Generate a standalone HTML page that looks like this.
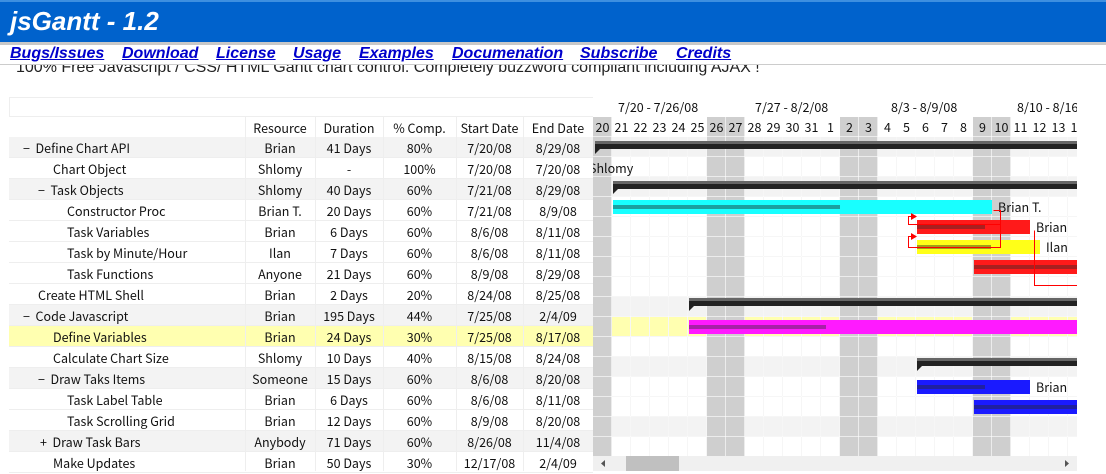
<!DOCTYPE html>
<html><head><meta charset="utf-8"><style>
*{margin:0;padding:0;box-sizing:border-box}
body{width:1106px;height:471px;overflow:hidden;background:#fff;position:relative;font-family:"Noto Sans CJK SC","Liberation Sans",sans-serif;font-size:12.5px;color:#111}
.a{position:absolute}
#hdr{left:0;top:0;width:1106px;height:42px;background:#0062cc;border-top:2px solid #3d8fe0}
#hdr span{position:absolute;left:10px;top:4px;font:italic bold 26px "Liberation Sans",sans-serif;color:#fff}
#bar{left:0;top:42px;width:1106px;height:3px;background:#c8c8c8}
.lk{position:absolute;top:45px;font:italic bold 16px "Liberation Sans",sans-serif;color:#0000cc;text-decoration:underline}
#sub{left:16px;top:64px;font:16px "Liberation Sans",sans-serif;color:#222;height:13px;overflow:hidden;white-space:nowrap}
.r{position:absolute;left:9px;width:584px;height:21px;border-bottom:1px solid #eee;line-height:22px}
.r span{position:absolute;top:0;text-align:center;white-space:nowrap}
.g{background:#f3f3f3}.y{background:#ffffb0}
.c1{left:236px;width:70px}.c2{left:306px;width:68px}.c3{left:374px;width:73px}.c4{left:447px;width:67px}.c5{left:514px;width:70px}
.vl{position:absolute;top:117px;width:1px;height:354px;background:#eee}
#chart{left:593px;top:97px;width:484px;height:374px;overflow:hidden}
.day{position:absolute;top:20px;width:19px;height:20px;text-align:center;line-height:20px;font-size:12.5px}
.we{position:absolute;top:20px;width:19px;height:340px;background:#cfcfcf}
.wk{position:absolute;top:0;font-size:12.5px;line-height:20px;white-space:nowrap}
.crow{position:absolute;left:0;width:484px;height:20px}
.bar{position:absolute;height:14px}
.pr{position:absolute;height:4px;top:5px;left:0}
.sm{position:absolute;height:8px;background:#222;border-top:3px solid #666}
.sm:after{content:"";position:absolute;left:0;top:5px;border-top:5px solid #222;border-right:5px solid transparent}
.lb{position:absolute;font-size:12.5px;white-space:nowrap}
</style></head><body>
<div id="hdr" class="a"><span>jsGantt - 1.2</span></div>
<div id="bar" class="a"></div>
<div id="sub" class="a"><div style="margin-top:-5px">100% Free Javascript / CSS/ HTML Gantt chart control. Completely buzzword compliant including AJAX !</div></div>
<span class="lk" style="left:10px">Bugs/Issues</span>
<span class="lk" style="left:122px">Download</span>
<span class="lk" style="left:216px">License</span>
<span class="lk" style="left:293px">Usage</span>
<span class="lk" style="left:359px">Examples</span>
<span class="lk" style="left:452px">Documenation</span>
<span class="lk" style="left:580px">Subscribe</span>
<span class="lk" style="left:676px">Credits</span>
<div class="a" style="left:0;top:64px;width:1106px;height:1px;background:#ccc"></div>

<div class="a" style="left:9px;top:97px;width:584px;height:20px;border:1px solid #eee;border-right:none"></div>
<div class="r" style="top:117px"><span class="c1">Resource</span><span class="c2">Duration</span><span class="c3">% Comp.</span><span class="c4">Start Date</span><span class="c5">End Date</span></div>
<div class="r g" style="top:137px"><span style="left:14px">−&nbsp; Define Chart API</span><span class="c1">Brian</span><span class="c2">41 Days</span><span class="c3">80%</span><span class="c4">7/20/08</span><span class="c5">8/29/08</span></div>
<div class="r" style="top:158px"><span style="left:44px">Chart Object</span><span class="c1">Shlomy</span><span class="c2">-</span><span class="c3">100%</span><span class="c4">7/20/08</span><span class="c5">7/20/08</span></div>
<div class="r g" style="top:179px"><span style="left:29px">−&nbsp; Task Objects</span><span class="c1">Shlomy</span><span class="c2">40 Days</span><span class="c3">60%</span><span class="c4">7/21/08</span><span class="c5">8/29/08</span></div>
<div class="r" style="top:200px"><span style="left:58px">Constructor Proc</span><span class="c1">Brian T.</span><span class="c2">20 Days</span><span class="c3">60%</span><span class="c4">7/21/08</span><span class="c5">8/9/08</span></div>
<div class="r" style="top:221px"><span style="left:58px">Task Variables</span><span class="c1">Brian</span><span class="c2">6 Days</span><span class="c3">60%</span><span class="c4">8/6/08</span><span class="c5">8/11/08</span></div>
<div class="r" style="top:242px"><span style="left:58px">Task by Minute/Hour</span><span class="c1">Ilan</span><span class="c2">7 Days</span><span class="c3">60%</span><span class="c4">8/6/08</span><span class="c5">8/11/08</span></div>
<div class="r" style="top:263px"><span style="left:58px">Task Functions</span><span class="c1">Anyone</span><span class="c2">21 Days</span><span class="c3">60%</span><span class="c4">8/9/08</span><span class="c5">8/29/08</span></div>
<div class="r" style="top:284px"><span style="left:29px">Create HTML Shell</span><span class="c1">Brian</span><span class="c2">2 Days</span><span class="c3">20%</span><span class="c4">8/24/08</span><span class="c5">8/25/08</span></div>
<div class="r g" style="top:305px"><span style="left:14px">−&nbsp; Code Javascript</span><span class="c1">Brian</span><span class="c2">195 Days</span><span class="c3">44%</span><span class="c4">7/25/08</span><span class="c5">2/4/09</span></div>
<div class="r y" style="top:326px"><span style="left:44px">Define Variables</span><span class="c1">Brian</span><span class="c2">24 Days</span><span class="c3">30%</span><span class="c4">7/25/08</span><span class="c5">8/17/08</span></div>
<div class="r" style="top:347px"><span style="left:44px">Calculate Chart Size</span><span class="c1">Shlomy</span><span class="c2">10 Days</span><span class="c3">40%</span><span class="c4">8/15/08</span><span class="c5">8/24/08</span></div>
<div class="r g" style="top:368px"><span style="left:29px">−&nbsp; Draw Taks Items</span><span class="c1">Someone</span><span class="c2">15 Days</span><span class="c3">60%</span><span class="c4">8/6/08</span><span class="c5">8/20/08</span></div>
<div class="r" style="top:389px"><span style="left:58px">Task Label Table</span><span class="c1">Brian</span><span class="c2">6 Days</span><span class="c3">60%</span><span class="c4">8/6/08</span><span class="c5">8/11/08</span></div>
<div class="r" style="top:410px"><span style="left:58px">Task Scrolling Grid</span><span class="c1">Brian</span><span class="c2">12 Days</span><span class="c3">60%</span><span class="c4">8/9/08</span><span class="c5">8/20/08</span></div>
<div class="r g" style="top:431px"><span style="left:31px">+&nbsp; Draw Task Bars</span><span class="c1">Anybody</span><span class="c2">71 Days</span><span class="c3">60%</span><span class="c4">8/26/08</span><span class="c5">11/4/08</span></div>
<div class="r" style="top:452px"><span style="left:44px">Make Updates</span><span class="c1">Brian</span><span class="c2">50 Days</span><span class="c3">30%</span><span class="c4">12/17/08</span><span class="c5">2/4/09</span></div>
<div class="vl" style="left:245px"></div><div class="vl" style="left:315px"></div><div class="vl" style="left:383px"></div><div class="vl" style="left:456px"></div><div class="vl" style="left:523px"></div>

<div id="chart" class="a">
 <div class="crow" style="top:40px;background:#f3f3f3"></div>
 <div class="crow" style="top:80px;background:#f3f3f3"></div>
 <div class="crow" style="top:200px;background:#f3f3f3"></div>
 <div class="crow" style="top:220px;background:#ffffb0"></div>
 <div class="crow" style="top:260px;background:#f3f3f3"></div>
 <div class="crow" style="top:320px;background:#f3f3f3"></div>
 <div class="a" style="left:0;top:40px;width:484px;height:320px;background:repeating-linear-gradient(90deg,transparent 0 18px,#e8e8e8 18px 19px),repeating-linear-gradient(180deg,transparent 0 19px,#e8e8e8 19px 20px)"></div>
 <div class="we" style="left:0"></div><div class="we" style="left:114px"></div><div class="we" style="left:133px"></div><div class="we" style="left:247px"></div><div class="we" style="left:266px"></div><div class="we" style="left:380px"></div><div class="we" style="left:399px"></div>
 <div class="a" style="left:0;top:20px;width:484px;height:340px;background:repeating-linear-gradient(90deg,transparent 0 18px,rgba(255,255,255,.6) 18px 19px),repeating-linear-gradient(180deg,transparent 0 19px,rgba(255,255,255,.6) 19px 20px)"></div>
 <span class="wk" style="left:25px">7/20 - 7/26/08</span><span class="wk" style="left:162px">7/27 - 8/2/08</span><span class="wk" style="left:298px">8/3 - 8/9/08</span><span class="wk" style="left:424px">8/10 - 8/16/08</span>
 <span class="day" style="left:0">20</span><span class="day" style="left:19px">21</span><span class="day" style="left:38px">22</span><span class="day" style="left:57px">23</span><span class="day" style="left:76px">24</span><span class="day" style="left:95px">25</span><span class="day" style="left:114px">26</span><span class="day" style="left:133px">27</span><span class="day" style="left:152px">28</span><span class="day" style="left:171px">29</span><span class="day" style="left:190px">30</span><span class="day" style="left:209px">31</span><span class="day" style="left:228px">1</span><span class="day" style="left:247px">2</span><span class="day" style="left:266px">3</span><span class="day" style="left:285px">4</span><span class="day" style="left:304px">5</span><span class="day" style="left:323px">6</span><span class="day" style="left:342px">7</span><span class="day" style="left:361px">8</span><span class="day" style="left:380px">9</span><span class="day" style="left:399px">10</span><span class="day" style="left:418px">11</span><span class="day" style="left:437px">12</span><span class="day" style="left:456px">13</span><span class="day" style="left:475px">14</span>

 <div class="sm" style="left:2px;top:44px;width:482px"></div>
 <span class="lb" style="left:-4px;top:61px">Shlomy</span>
 <div class="sm" style="left:20px;top:84px;width:464px"></div>
 <div class="bar" style="left:20px;top:103px;width:379px;background:#18ffff"><div class="pr" style="width:227px;background:#1aa0a0"></div></div>
 <span class="lb" style="left:405px;top:100px">Brian T.</span>
 <div class="bar" style="left:324px;top:123px;width:113px;background:#ff1a1a"><div class="pr" style="width:68px;background:#a82020"></div></div>
 <span class="lb" style="left:443px;top:120px">Brian</span>
 <div class="bar" style="left:324px;top:143px;width:123px;background:#ffff18"><div class="pr" style="width:74px;background:#a0a018"></div></div>
 <span class="lb" style="left:453px;top:140px">Ilan</span>
 <div class="bar" style="left:381px;top:163px;width:103px;background:#ff1a1a"><div class="pr" style="width:103px;background:#a82020"></div></div>
 <svg class="a" style="left:0;top:0" width="484" height="374"><g fill="none" stroke="#f00" stroke-width="1">
 <path d="M400.5 113.5H407.5V150.5H315.5V139.5H322"/><path d="M407.5 113.5V127.5H315.5V119.5H322"/>
 <path d="M441.5 133.5V188.5H484"/></g>
 <path d="M318 116l6 3.5-6 3.5zM318 136l6 3.5-6 3.5z" fill="#f00"/></svg>
 <div class="sm" style="left:96px;top:201px;width:388px"></div>
 <div class="bar" style="left:96px;top:223px;width:388px;background:#ff1aff"><div class="pr" style="width:137px;background:#a820a8"></div></div>
 <div class="sm" style="left:324px;top:261px;width:160px"></div>
 <div class="bar" style="left:324px;top:283px;width:113px;background:#1a1aff"><div class="pr" style="width:68px;background:#2020a0"></div></div>
 <span class="lb" style="left:443px;top:280px">Brian</span>
 <div class="bar" style="left:381px;top:303px;width:103px;background:#1a1aff"><div class="pr" style="width:103px;background:#2020a0"></div></div>
 <div class="a" style="left:0;top:359px;width:484px;height:15px;background:#f0f0f0"></div>
 <div class="a" style="left:33px;top:359px;width:53px;height:15px;background:#c0c0c0"></div>
 <svg class="a" style="left:0;top:359px" width="484" height="15"><path d="M8 7.5l4-3.5v7zM476 7.5l-4-3.5v7z" fill="#555"/></svg>
</div>
</body></html>
